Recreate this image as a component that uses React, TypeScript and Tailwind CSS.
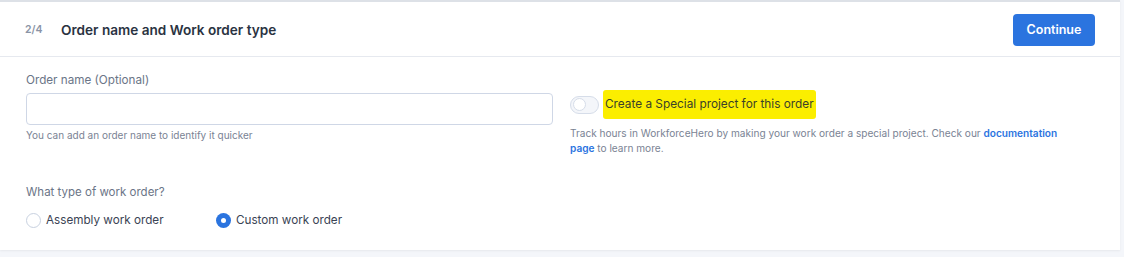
import React from "react";

export default function App() {
  return (
    <div
      className="w-[1124px] h-[257px] bg-[#f4f6fa] overflow-hidden"
      style={{ fontFamily: "Inter, 'Open Sans', sans-serif" }}
    >
      <div className="w-[1120px] h-[250px] bg-white border-t-2 border-[#dde1e7] shadow-[0_1px_2px_rgba(0,0,0,0.06)]">
        <div className="h-[55px] flex items-center justify-between pl-[25px] pr-[25px] border-b border-[#e6e9ef]">
          <div className="flex items-center pt-[2px]">
            <span className="text-[10.5px] font-semibold text-[#8a94a6] w-[36px]">2/4</span>
            <span className="text-[13.6px] font-semibold text-[#2a3342]">Order name and Work order type</span>
          </div>
          <button className="h-[32px] w-[82px] mt-[2px] rounded-[4px] bg-[#2b74df] text-white text-[12.5px] font-semibold">
            Continue
          </button>
        </div>
        <div className="pl-[26px] pt-[15px] flex">
          <div className="w-[527px]">
            <div className="text-[11.7px] text-[#6b7587] leading-[16px]">Order name (Optional)</div>
            <input className="mt-[5px] w-[527px] h-[32px] rounded-[4px] border border-[#cfd7e6] outline-none" />
            <div className="mt-[3px] text-[10px] text-[#7a8394] leading-[14px]">
              You can add an order name to identify it quicker
            </div>
          </div>
          <div className="ml-[17px] w-[500px] pt-[18px]">
            <div className="flex items-center">
              <div className="w-[29px] h-[18px] rounded-full border border-[#d6dde9] bg-[#f4f6fa] flex items-center pl-[2px]">
                <div className="w-[13px] h-[13px] rounded-full bg-white border border-[#d6dde9]" />
              </div>
              <span className="ml-[4px] bg-[#fbee00] px-[2px] pt-[6px] pb-[7px] text-[11.8px] text-[#3a3f2a] leading-[16px] rounded-[3px]">
                Create a Special project for this order
              </span>
            </div>
            <div className="mt-[7px] text-[10.1px] text-[#7a8394] leading-[15px] w-[492px]">
              Track hours in WorkforceHero by making your work order a special project. Check our{" "}
              <span className="text-[#2b74df] font-semibold">documentation</span>{" "}
              <span className="text-[#2b74df] font-semibold">page</span> to learn more.
            </div>
          </div>
        </div>
        <div className="pl-[26px] mt-[28px]">
          <div className="text-[11.5px] text-[#6b7587] leading-[16px]">What type of work order?</div>
          <div className="mt-[12px] flex items-center text-[11.7px] text-[#3a4354]">
            <div className="flex items-center w-[190px]">
              <div className="w-[15px] h-[15px] rounded-full border border-[#c8d1e0] bg-white" />
              <span className="ml-[5px]">Assembly work order</span>
            </div>
            <div className="flex items-center">
              <div className="w-[15px] h-[15px] rounded-full bg-[#2b74df] flex items-center justify-center">
                <div className="w-[5px] h-[5px] rounded-full bg-white" />
              </div>
              <span className="ml-[5px]">Custom work order</span>
            </div>
          </div>
        </div>
      </div>
    </div>
  );
}
